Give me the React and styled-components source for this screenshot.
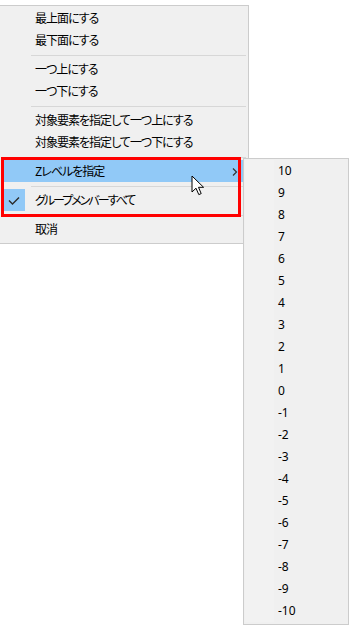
import React from "react";
import styled, { createGlobalStyle } from "styled-components";

const Global = createGlobalStyle`
  html, body { margin: 0; padding: 0; background: #ffffff; }
  body { width: 350px; height: 631px; overflow: hidden; }
  #root { position: relative; width: 350px; height: 631px; }
`;

const Stage = styled.div`
  position: relative;
  width: 350px;
  height: 631px;
  padding-top: 5px;
  box-sizing: border-box;
  display: flex;
  flex-direction: column;
  align-items: flex-start;
`;

const Menu = styled.div`
  box-sizing: border-box;
  width: 250px;
  margin-left: -1px;
  display: flex;
  flex-direction: column;
  background: #f0f0f0;
  border: 1px solid #cccccc;
  padding: 1px 2px 3px;
  font-family: "Noto Sans CJK JP", "Noto Sans", sans-serif;
  font-feature-settings: "palt" 1;
  font-size: 12px;
  color: #000;
`;

const Item = styled.div`
  position: relative;
  height: 22px;
  padding-left: 33px;
  display: flex;
  align-items: center;
  background: ${(p) => (p.$active ? "#91c9f7" : "transparent")};
  white-space: nowrap;
  line-height: 1;
  letter-spacing: ${(p) => (p.$tight ? "-2px" : "-1px")};
`;

const Sep = styled.div`
  height: 1px;
  margin: 4px 0 2px 29px;
  background: #d7d7d7;
`;

const CheckBox = styled.div`
  position: absolute;
  left: 1px;
  top: 0;
  width: 22px;
  height: 22px;
  background: #91c9f7;
  display: flex;
  align-items: center;
  justify-content: center;
`;

const Chevron = styled.svg`
  position: absolute;
  right: 8px;
  top: 8px;
`;

const SubMenu = styled.div`
  position: absolute;
  left: 243px;
  top: 158px;
  box-sizing: border-box;
  width: 106px;
  display: flex;
  flex-direction: column;
  background: #f0f0f0;
  border: 1px solid #cccccc;
  padding: 1px 1px 2px;
  font-family: "Noto Sans", "Open Sans", sans-serif;
  font-size: 12px;
  color: #000;
`;

const Gutter = styled.div`
  position: absolute;
  left: 1px;
  top: 1px;
  bottom: 2px;
  width: 29px;
  background: #f2f2f2;
`;

const NumItem = styled.div`
  position: relative;
  height: 22px;
  padding-left: 33px;
  display: flex;
  align-items: center;
  line-height: 1;
`;

const Highlight = styled.div`
  position: absolute;
  left: 1px;
  top: 157px;
  width: 234px;
  height: 54px;
  border: 3px solid #ff0000;
  pointer-events: none;
`;

const Cursor = styled.svg`
  position: absolute;
  left: 191px;
  top: 175px;
`;

const levels = [10, 9, 8, 7, 6, 5, 4, 3, 2, 1, 0, -1, -2, -3, -4, -5, -6, -7, -8, -9, -10];

export default function App() {
  return (
    <>
      <Global />
      <Stage>
        <Menu>
          <Item>最上面にする</Item>
          <Item>最下面にする</Item>
          <Sep />
          <Item>一つ上にする</Item>
          <Item>一つ下にする</Item>
          <Sep />
          <Item>対象要素を指定して一つ上にする</Item>
          <Item>対象要素を指定して一つ下にする</Item>
          <Sep />
          <Item $active>
            Zレベルを指定
            <Chevron width="6" height="8" viewBox="0 0 6 8">
              <polyline points="1,0.5 4.5,4 1,7.5" fill="none" stroke="#333" strokeWidth="1.2" />
            </Chevron>
          </Item>
          <Sep />
          <Item $tight>
            <CheckBox>
              <svg width="12" height="9" viewBox="0 0 12 9">
                <polyline points="1,4.5 4.5,8 11,1.5" fill="none" stroke="#2b2b2b" strokeWidth="1.4" />
              </svg>
            </CheckBox>
            グループメンバーすべて
          </Item>
          <Sep />
          <Item>取消</Item>
        </Menu>
        <SubMenu>
          <Gutter />
          {levels.map((n) => (
            <NumItem key={n}>{n}</NumItem>
          ))}
        </SubMenu>
        <Highlight />
        <Cursor width="14" height="22" viewBox="0 0 14 22">
          <path
            d="M1 1 L1 17 L5 13.2 L7.8 19.6 L10.2 18.6 L7.5 12.3 L12.6 12.3 Z"
            fill="#ffffff"
            stroke="#000000"
            strokeWidth="1"
            strokeLinejoin="miter"
          />
        </Cursor>
      </Stage>
    </>
  );
}
